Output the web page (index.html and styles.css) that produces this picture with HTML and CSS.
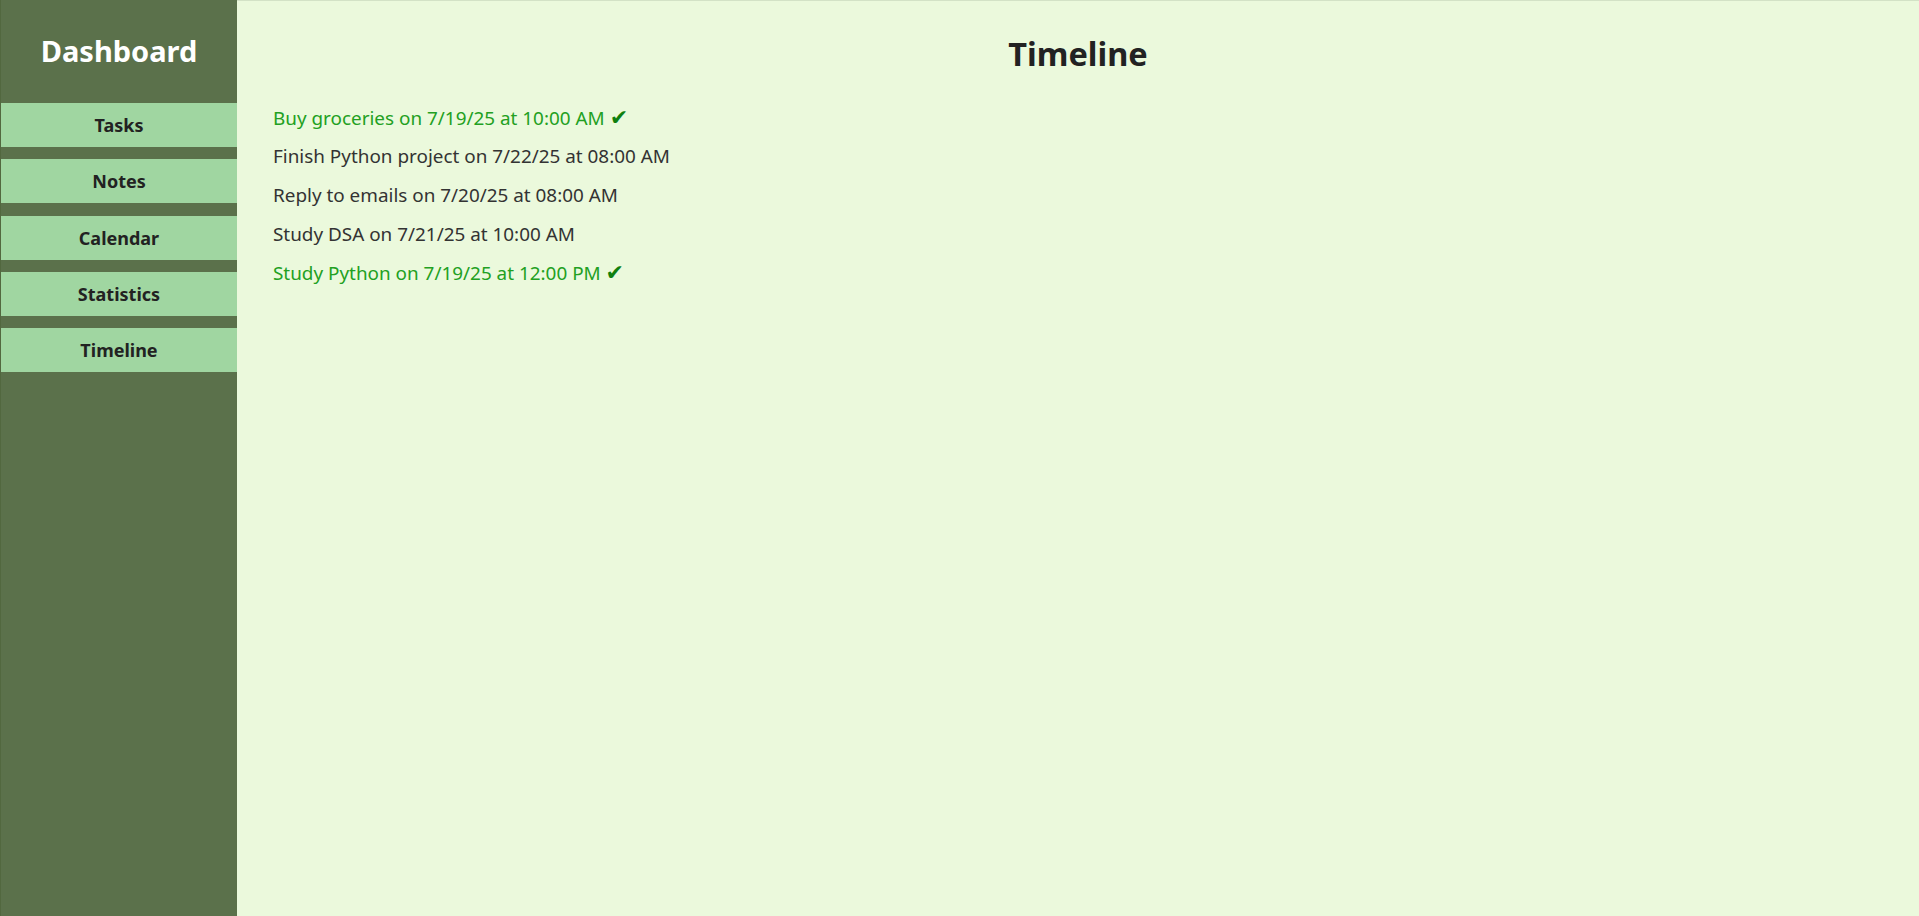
FILE: index.html
```html
<!DOCTYPE html>
<html lang="en">
<head>
<meta charset="utf-8">
<title>Timeline</title>
<link rel="stylesheet" href="styles.css">
</head>
<body>
<div class="layout">
  <aside class="sidebar">
    <h2 class="brand">Dashboard</h2>
    <nav class="nav">
      <a class="nav-btn" href="#">Tasks</a>
      <a class="nav-btn" href="#">Notes</a>
      <a class="nav-btn" href="#">Calendar</a>
      <a class="nav-btn" href="#">Statistics</a>
      <a class="nav-btn" href="#">Timeline</a>
    </nav>
  </aside>
  <main class="content">
    <h1 class="title">Timeline</h1>
    <ul class="timeline">
      <li class="item done">Buy groceries on 7/19/25 at 10:00 AM <span class="check">✔</span></li>
      <li class="item">Finish Python project on 7/22/25 at 08:00 AM</li>
      <li class="item">Reply to emails on 7/20/25 at 08:00 AM</li>
      <li class="item">Study DSA on 7/21/25 at 10:00 AM</li>
      <li class="item done">Study Python on 7/19/25 at 12:00 PM <span class="check">✔</span></li>
    </ul>
  </main>
</div>
</body>
</html>
```

FILE: styles.css
```css
html, body {
  margin: 0;
  padding: 0;
  height: 100%;
}

body {
  font-family: "Noto Sans", "Open Sans", "DejaVu Sans", sans-serif;
  background: #ebf9dc;
  color: #333333;
}

.layout {
  display: flex;
  height: 916px;
}

.sidebar {
  width: 237px;
  flex: 0 0 237px;
  background: #5b714b;
  border-left: 1px solid #52683f;
  box-sizing: border-box;
  display: flex;
  flex-direction: column;
}

.brand {
  margin: 0;
  height: 103px;
  display: flex;
  align-items: center;
  justify-content: center;
  color: #ffffff;
  font-size: 29px;
  font-weight: 700;
  padding-bottom: 3px;
  box-sizing: border-box;
}

.nav {
  display: flex;
  flex-direction: column;
  gap: 12.3px;
}

.nav-btn {
  display: flex;
  align-items: center;
  justify-content: center;
  height: 44px;
  background: #a0d6a1;
  color: #222222;
  text-decoration: none;
  font-size: 18px;
  font-weight: 700;
}

.content {
  flex: 1;
  border-top: 1px solid #d3e2c6;
  padding: 0 36px;
}

.title {
  margin: 0;
  padding-top: 33px;
  height: 70px;
  box-sizing: border-box;
  text-align: center;
  font-size: 32.5px;
  font-weight: 700;
  line-height: 40px;
  color: #222222;
}

.timeline {
  list-style: none;
  margin: 27.5px 0 0;
  padding: 0;
  display: flex;
  flex-direction: column;
}

.item {
  font-size: 18.9px;
  line-height: 38.8px;
  color: #333333;
}

.item.done {
  color: #22a022;
}

.check {
  color: #0f800f;
  font-family: "DejaVu Sans", sans-serif;
  font-size: 22px;
  line-height: 1;
}
```
